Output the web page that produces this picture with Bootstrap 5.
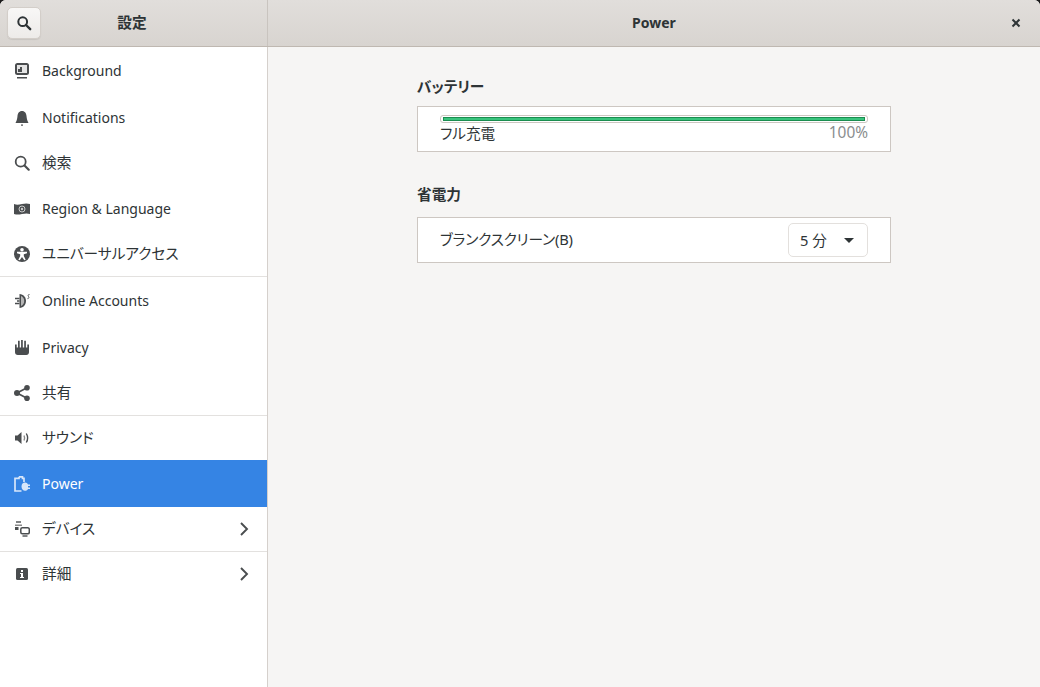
<!DOCTYPE html>
<html lang="ja">
<head>
<meta charset="utf-8">
<title>設定</title>
<link href="https://cdn.jsdelivr.net/npm/bootstrap@5.3.0/dist/css/bootstrap.min.css" rel="stylesheet">
<style>
html,body{height:100%;margin:0;background:#1b1b1b;overflow:hidden}
body{font-family:"Noto Sans","Noto Sans CJK JP",sans-serif;font-size:14px;color:#2e3436}
.ja{font-size:14.67px;font-feature-settings:"palt"}
.win{width:1040px;height:687px;background:#f6f5f4;border-radius:6px 6px 0 0;overflow:hidden}
.hdr{height:47px;background:linear-gradient(#e1dedb,#d8d4d0);border-bottom:1px solid #bfb8b1;flex:none}
.hdr-left{width:268px;border-right:1px solid #c9c4bf;padding-left:7px}
.hdr-title{font-weight:700;color:#2e3436;padding-bottom:2px}
.hdr-left .hdr-title{flex:1;text-align:center;padding-right:44px}
.btn-search{width:34px;height:32px;padding:0;background:linear-gradient(#f8f7f6,#edebe9);border:1px solid #d3cec9;border-radius:5px;box-shadow:0 1px 1px rgba(0,0,0,.08)}
.btn-close-win{width:34px;height:32px;padding:0;background:transparent;border:0;margin-right:7px}
.title-pad{padding-left:41px}
.side{width:268px;background:#fff;border-right:1px solid #d5d0cc;flex:none}
.side .list-group-item{height:47px;padding:0 14px;border:0;border-radius:0;color:#2e3436;background:#fff;gap:12px;font-size:14px;margin-top:0}
.side .list-group-item.short{height:44px}
.side .list-group-item .ja{padding-bottom:2px}
.side .list-group-item.active{background:#3584e4;color:#fff;margin-top:0}
.side .list-group-item.active .ico{color:#d7e6fa}
.rule{height:1px;background:#e3e1df;flex:none}
.ico{width:16px;height:16px;flex:none;color:#4a4d4f;display:block}
.ico-dark{color:#2e3436}
.chev{margin-left:auto;margin-right:1px;width:16px;height:16px;color:#4a4d4f}
.main-pane{flex:1;min-width:0}
.col-power{width:474px;margin-left:149px;padding-top:29px}
.sec-title{font-weight:700;line-height:20px;height:20px;color:#2e3436}
.sec-a{margin-bottom:10px}
.sec-b{margin-bottom:13px}
.frame{height:46px;background:#fff;border:1px solid #cdc7c2;padding:0 22px}
.gap-b{margin-bottom:32px}
.lvl{height:8px;border:1px solid #cdc7c2;border-radius:3px;background:#fff;padding:1px 2px;margin-top:8px}
.lvl-fill{height:100%;background:#3ac47d;border:1px solid #1b8d50;width:100%}
.lvl-row{line-height:20px}
.pct{color:#8a8d8e;font-size:15.4px}
.combo{width:80px;height:34px;border:1px solid #e3e0dd;border-radius:5px;background:#fff;padding:0 11px;color:#2e3436}
.caret{width:0;height:0;border-left:5px solid transparent;border-right:5px solid transparent;border-top:5px solid #2e3436;margin-right:2px}
.blank-label{letter-spacing:-.15px;padding-bottom:2px}
</style>
</head>
<body>
<div class="win d-flex flex-column">
  <div class="hdr d-flex">
    <div class="hdr-left d-flex align-items-center">
      <button class="btn-search d-flex align-items-center justify-content-center" type="button" aria-label="検索">
        <svg class="ico ico-dark" viewBox="0 0 16 16"><circle cx="6.700" cy="6.700" r="4.400" fill="none" stroke="currentColor" stroke-width="2"/><path d="M10 10l4.200 4.200" stroke="currentColor" stroke-width="2.400" stroke-linecap="round"/></svg>
      </button>
      <div class="hdr-title ja">設定</div>
    </div>
    <div class="flex-grow-1 d-flex align-items-center">
      <div class="hdr-title flex-grow-1 text-center title-pad">Power</div>
      <button class="btn-close-win d-flex align-items-center justify-content-center" type="button" aria-label="閉じる">
        <svg class="ico ico-dark" viewBox="0 0 16 16"><path d="M4.500 4.500l7 7M11.500 4.500l-7 7" stroke="currentColor" stroke-width="2"/></svg>
      </button>
    </div>
  </div>
  <div class="d-flex flex-grow-1" style="min-height:0">
    <nav class="side d-flex flex-column">
      <div class="list-group list-group-flush">
        <div class="list-group-item d-flex align-items-center"><svg class="ico" viewBox="0 0 16 16"><rect x="1" y="0" width="14" height="12" rx="2.500" fill="currentColor"/><rect x="3" y="2" width="10" height="8" fill="#e4e4e4"/><path d="M4 9V6h2V4h2v5z" fill="currentColor"/><rect x="3" y="14" width="10" height="1.500" fill="currentColor"/></svg>Background</div>
        <div class="list-group-item d-flex align-items-center"><svg class="ico" viewBox="0 0 16 16"><path d="M8 1C5 1 3.700 3.500 3.500 6c-.2 3-1 5-2 7h13c-1-2-1.800-4-2-7C12.300 3.500 11 1 8 1z" fill="currentColor"/><rect x="7" y="14.500" width="2" height="1.200" fill="currentColor"/></svg>Notifications</div>
        <div class="list-group-item short d-flex align-items-center"><svg class="ico" viewBox="0 0 16 16"><circle cx="6.700" cy="6.700" r="5" fill="none" stroke="currentColor" stroke-width="1.800"/><path d="M10.500 10.500l4.200 4.200" stroke="currentColor" stroke-width="2.200" stroke-linecap="round"/></svg><span class="ja">検索</span></div>
        <div class="list-group-item d-flex align-items-center"><svg class="ico" viewBox="0 0 16 16"><path d="M0 3c3 1.200 5 .6 8 0s5-.8 8 0v10c-3-1-5-.6-8 0s-5 .8-8 0z" fill="currentColor"/><circle cx="8" cy="8" r="3" fill="none" stroke="#c9c9c9" stroke-width="1"/><circle cx="8" cy="8" r="1.200" fill="#c9c9c9"/></svg>Region &amp; Language</div>
        <div class="list-group-item short d-flex align-items-center"><svg class="ico" viewBox="0 0 16 16"><circle cx="8" cy="8" r="8" fill="currentColor"/><circle cx="8" cy="3.800" r="1.800" fill="#fff"/><path d="M3 5.800h10v1.500L9.800 8.200V10l1.900 3.700-1.400.6L8 11l-2.300 3.300-1.400-.6L6.200 10V8.200L3 7.300z" fill="#fff"/></svg><span class="ja">ユニバーサルアクセス</span></div>
      </div>
      <div class="rule"></div>
      <div class="list-group list-group-flush">
        <div class="list-group-item d-flex align-items-center"><svg class="ico" viewBox="0 0 16 16"><path d="M5.500 1c4 .3 6.500 3.300 6.500 7s-2.500 6.700-6.500 7z" fill="currentColor"/><path d="M7 3c2 .8 3.200 2.700 3.200 5S9 12.200 7 13z" fill="#b5b5b5"/><path d="M1 5.500h4.500M1 10.500h4.500M3 8h2.500" stroke="currentColor" stroke-width="1.500"/><path d="M15.500 1.500c-1.500 0-1.800 1-1 2s.3 2.200-1 2.200" fill="none" stroke="currentColor" stroke-width=".9"/></svg>Online Accounts</div>
        <div class="list-group-item d-flex align-items-center"><svg class="ico" viewBox="0 0 16 16"><path d="M1 4.500h1.700V10H1zM4 .8h1.700V8H4zM7.100 0h1.700V8H7.100zM10.200 .8h1.700V8h-1.700zM13.300 4.500H15V10h-1.700z" fill="currentColor"/><path d="M1 7.500h14V12c0 1.800-1 3-2.800 3H3.800C2 15 1 13.800 1 12z" fill="currentColor"/></svg>Privacy</div>
        <div class="list-group-item short d-flex align-items-center"><svg class="ico" viewBox="0 0 16 16"><circle cx="3" cy="8" r="3" fill="currentColor"/><circle cx="13" cy="2.800" r="2.800" fill="currentColor"/><circle cx="13" cy="13.200" r="2.800" fill="currentColor"/><path d="M13 2.800L3 8l10 5.200" fill="none" stroke="currentColor" stroke-width="1.700"/></svg><span class="ja">共有</span></div>
      </div>
      <div class="rule"></div>
      <div class="list-group list-group-flush">
        <div class="list-group-item short d-flex align-items-center"><svg class="ico" viewBox="0 0 16 16"><path d="M1 5.500h2.500L7.500 2v12L3.500 10.500H1z" fill="currentColor"/><path d="M10 5.500c.8 1.600.8 3.400 0 5" fill="none" stroke="#888" stroke-width="1.400"/><path d="M12.300 3.500c1.600 2.700 1.600 6.300 0 9" fill="none" stroke="currentColor" stroke-width="1.400"/></svg><span class="ja">サウンド</span></div>
        <div class="list-group-item active d-flex align-items-center"><svg class="ico" viewBox="0 0 16 16"><path d="M5 .8v1.500H1V15h6.500M5 .8h3.500v1.500H10V6" fill="none" stroke="currentColor" stroke-width="1.700"/><path d="M7.500 10.500C7.500 8 9 6.500 11 6.500c1.500 0 2.500.8 3 2h2V10h-2v1.500h2V13h-2c-.5 1-1.500 1.800-3 1.800-2 0-3.500-1.800-3.500-4.300z" fill="currentColor"/></svg>Power</div>
        <div class="list-group-item short d-flex align-items-center"><svg class="ico" viewBox="0 0 16 16"><path d="M2 1h5" stroke="currentColor" stroke-width="1.400"/><rect x="1" y="3.500" width="7" height="1.500" fill="#888"/><rect x="1" y="6" width="3.500" height="3" fill="currentColor"/><rect x="6.800" y="6.800" width="8.500" height="6" rx="1.500" fill="none" stroke="currentColor" stroke-width="1.500"/><path d="M8.500 15h5" stroke="currentColor" stroke-width="1.400"/></svg><span class="ja">デバイス</span><svg class="chev" viewBox="0 0 16 16"><path d="M5 2l6 6-6 6" fill="none" stroke="currentColor" stroke-width="1.900"/></svg></div>
      </div>
      <div class="rule"></div>
      <div class="list-group list-group-flush">
        <div class="list-group-item short d-flex align-items-center"><svg class="ico" viewBox="0 0 16 16"><rect x="2" y="2" width="12" height="12" rx="1.500" fill="currentColor"/><rect x="7" y="4" width="2" height="2" fill="#fff"/><path d="M6 7h3v4h1v1H6v-1h1V8H6z" fill="#fff"/></svg><span class="ja">詳細</span><svg class="chev" viewBox="0 0 16 16"><path d="M5 2l6 6-6 6" fill="none" stroke="currentColor" stroke-width="1.900"/></svg></div>
      </div>
    </nav>
    <main class="main-pane">
      <div class="col-power">
        <div class="sec-title sec-a ja">バッテリー</div>
        <div class="frame gap-b">
          <div class="lvl"><div class="lvl-fill"></div></div>
          <div class="lvl-row d-flex justify-content-between"><span class="ja">フル充電</span><span class="pct">100%</span></div>
        </div>
        <div class="sec-title sec-b ja">省電力</div>
        <div class="frame d-flex align-items-center justify-content-between">
          <span class="ja blank-label">ブランクスクリーン(B)</span>
          <div class="combo d-flex align-items-center justify-content-between"><span class="ja">5 分</span><span class="caret"></span></div>
        </div>
      </div>
    </main>
  </div>
</div>
<script src="https://cdn.jsdelivr.net/npm/bootstrap@5.3.0/dist/js/bootstrap.bundle.min.js"></script>
</body>
</html>
